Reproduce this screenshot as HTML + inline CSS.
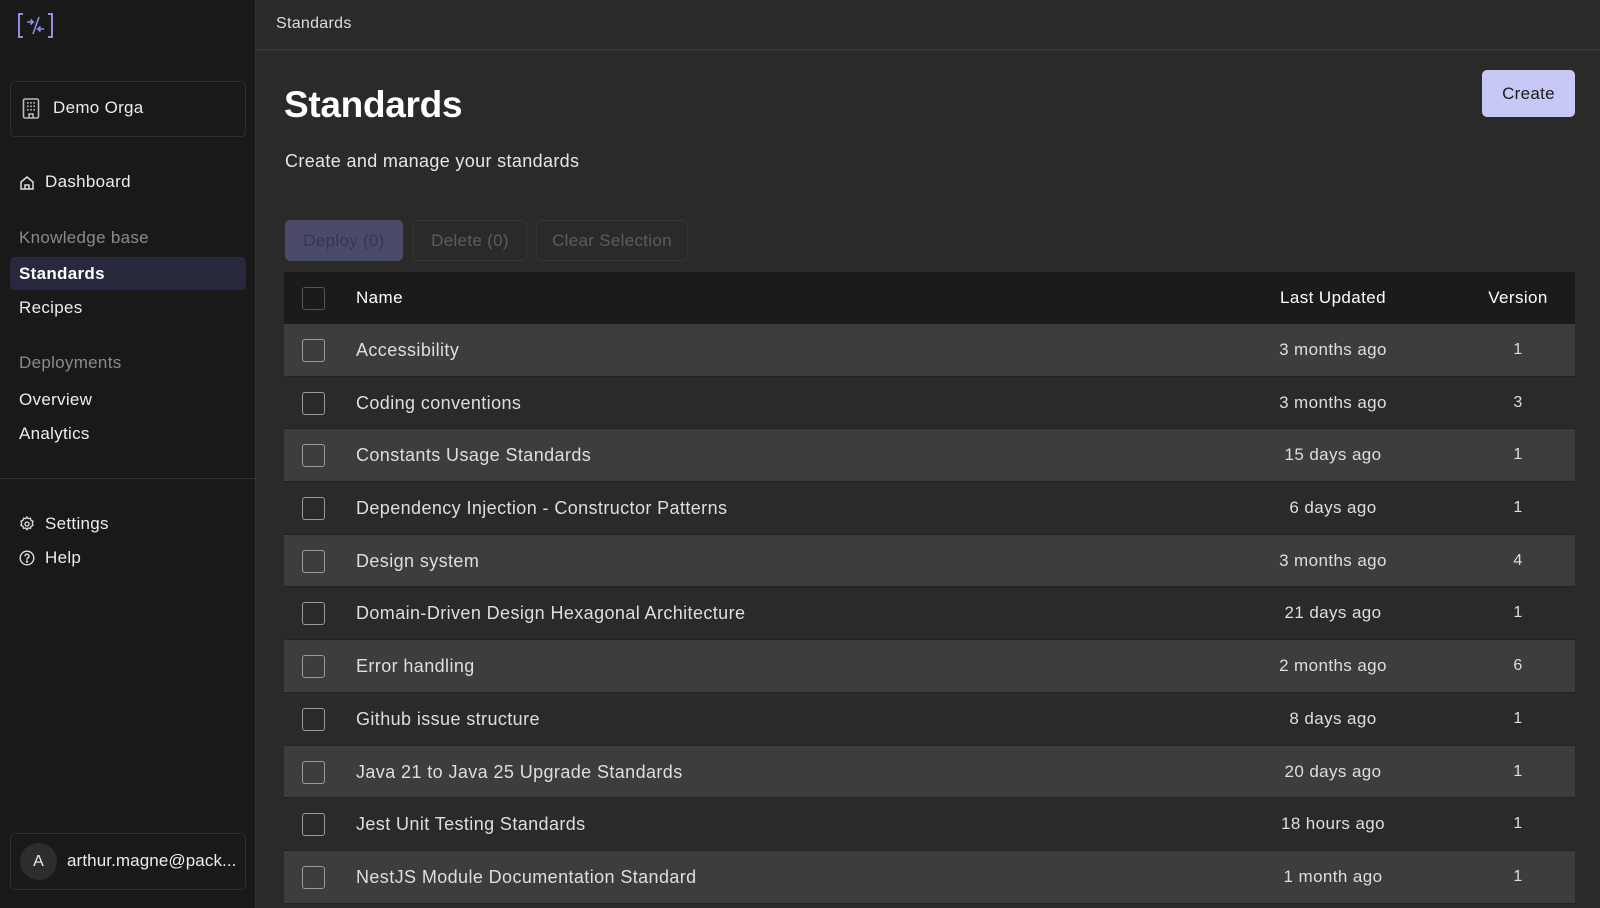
<!DOCTYPE html>
<html><head><meta charset="utf-8"><style>
*{box-sizing:border-box;margin:0;padding:0}
body{width:1600px;height:908px;overflow:hidden;background:#2a2a29;font-family:"Liberation Sans",sans-serif;color:#e8e8e8;position:relative}
.sb{position:absolute;left:0;top:0;width:256px;height:908px;background:#191919;border-right:1px solid #333}
.a{position:absolute;white-space:nowrap}
.nav{font-size:17px;color:#ececec;letter-spacing:0.3px}
.sec{font-size:17px;color:#8a8a8a;letter-spacing:0.3px}
.main{position:absolute;left:256px;top:0;right:0;height:908px}
.top{position:absolute;left:0;top:0;right:0;height:51px;border-bottom:2px solid #363636}
.btn{position:absolute;top:220px;height:41px;border-radius:5px;font-size:17px;line-height:39px;text-align:center;border:1px solid #363636;color:#5c5c5c;letter-spacing:0.3px}
.tbl{position:absolute;left:284px;top:272px;width:1291px}
.row{height:52.7px;position:relative;border-bottom:1px solid #222;font-size:18px;letter-spacing:0.4px}
.row .cb{position:absolute;left:18px;top:15px;width:23px;height:23px;border:1.5px solid #9a9a9a;border-radius:3px}
.row .n{position:absolute;left:72px;top:0;line-height:52px;color:#dedede}
.row .d{position:absolute;left:934px;width:230px;text-align:center;line-height:52px;font-size:17px;color:#dedede}
.row .v{position:absolute;left:1204px;width:60px;text-align:center;line-height:52px;font-size:16px;color:#dedede}
.o{background:#3d3d3c}.e{background:#2a2a29}
</style></head><body>
<div class="sb">
 <svg class="a" style="left:17px;top:13px" width="37" height="25" viewBox="0 0 37 25" fill="none" stroke="#8f8fe6" stroke-width="2"><path d="M6 1H2v23h4"/><path d="M31 1h4v23h-4"/><path d="M10 9h6l-2.5-2.5M16 9l-2.5 2.5" stroke-width="1.6"/><path d="M22 4l-6 17" stroke-width="1.6"/><path d="M27 16h-6l2.5-2.5M21 16l2.5 2.5" stroke-width="1.6"/></svg>
 <div class="a" style="left:10px;top:81px;width:236px;height:56px;border:1px solid #2e2e2e;border-radius:5px"></div>
 <svg class="a" style="left:22px;top:98px" width="18" height="21" viewBox="0 0 18 21" fill="none" stroke="#bbb" stroke-width="1.6"><rect x="1.5" y="1" width="15" height="19" rx="1.5"/><path d="M7 20v-4h4v4" /><g fill="#bbb" stroke="none"><rect x="5" y="4" width="1.6" height="1.6"/><rect x="8.2" y="4" width="1.6" height="1.6"/><rect x="11.4" y="4" width="1.6" height="1.6"/><rect x="5" y="7.5" width="1.6" height="1.6"/><rect x="8.2" y="7.5" width="1.6" height="1.6"/><rect x="11.4" y="7.5" width="1.6" height="1.6"/><rect x="5" y="11" width="1.6" height="1.6"/><rect x="8.2" y="11" width="1.6" height="1.6"/><rect x="11.4" y="11" width="1.6" height="1.6"/></g></svg>
 <div class="a nav" style="left:53px;top:98px">Demo Orga</div>
 <svg class="a" style="left:19px;top:175px" width="16" height="16" viewBox="0 0 16 16" fill="none" stroke="#ddd" stroke-width="1.5"><path d="M2 7L8 2l6 5v7H2z"/><path d="M6 14v-4h4v4"/></svg>
 <div class="a nav" style="left:45px;top:172px">Dashboard</div>
 <div class="a sec" style="left:19px;top:228px">Knowledge base</div>
 <div class="a" style="left:10px;top:257px;width:236px;height:33px;background:#28283d;border-radius:4px"></div>
 <div class="a nav" style="left:19px;top:264px;font-weight:bold;color:#fff">Standards</div>
 <div class="a nav" style="left:19px;top:298px">Recipes</div>
 <div class="a sec" style="left:19px;top:353px">Deployments</div>
 <div class="a nav" style="left:19px;top:390px">Overview</div>
 <div class="a nav" style="left:19px;top:424px">Analytics</div>
 <div class="a" style="left:0;top:478px;width:256px;height:1px;background:#333"></div>
 <svg class="a" style="left:19px;top:516px" width="16" height="16" viewBox="0 0 24 24" fill="none" stroke="#ddd" stroke-width="2"><circle cx="12" cy="12" r="3"/><path d="M12 1.5l2 2.5 3.2-.6.8 3.1 3 1.4-1 3.1 1 3.1-3 1.4-.8 3.1-3.2-.6-2 2.5-2-2.5-3.2.6-.8-3.1-3-1.4 1-3.1-1-3.1 3-1.4.8-3.1 3.2.6z"/></svg>
 <div class="a nav" style="left:45px;top:514px">Settings</div>
 <svg class="a" style="left:19px;top:550px" width="16" height="16" viewBox="0 0 16 16" fill="none" stroke="#ddd" stroke-width="1.4"><circle cx="8" cy="8" r="6.8"/><path d="M6 6.2a2 2 0 1 1 2.6 1.9c-.4.2-.6.6-.6 1v.6"/><circle cx="8" cy="11.6" r=".5" fill="#ddd"/></svg>
 <div class="a nav" style="left:45px;top:548px">Help</div>
 <div class="a" style="left:10px;top:833px;width:236px;height:57px;border:1px solid #2e2e2e;border-radius:5px"></div>
 <div class="a" style="left:20px;top:843px;width:37px;height:37px;border-radius:50%;background:#2d2d2d;color:#eee;font-size:16px;text-align:center;line-height:37px">A</div>
 <div class="a nav" style="left:67px;top:851px;letter-spacing:0.1px">arthur.magne@pack...</div>
</div>
<div class="main">
 <div class="top"><div class="a" style="left:20px;top:15px;font-size:16px;color:#ddd;letter-spacing:0.3px">Standards</div></div>
 <div class="a" style="left:1226px;top:70px;width:93px;height:47px;background:#c8c8f7;border-radius:5px;color:#1a1a1a;font-size:17px;text-align:center;line-height:47px;letter-spacing:0.3px">Create</div>
</div>
<div class="a" style="left:284px;top:84px;font-size:37px;font-weight:bold;color:#fff;letter-spacing:-0.3px">Standards</div>
<div class="a" style="left:285px;top:151px;font-size:18px;color:#e6e6e6;letter-spacing:0.35px">Create and manage your standards</div>
<div class="btn" style="left:285px;width:118px;background:#4a4b6a;border-color:#4a4b6a;color:#333850">Deploy (0)</div>
<div class="btn" style="left:413px;width:114px">Delete (0)</div>
<div class="btn" style="left:536px;width:152px">Clear Selection</div>
<div class="tbl">
 <div class="row" style="background:#1b1b1b;height:52px;border:none;font-size:17px">
  <div class="cb" style="border-color:#555;border-width:1px"></div>
  <div class="n" style="color:#fff">Name</div>
  <div class="d" style="color:#fff">Last Updated</div>
  <div class="v" style="color:#fff;font-size:17px;width:80px;left:1194px">Version</div>
 </div>
 <div class="row o"><div class="cb"></div><div class="n">Accessibility</div><div class="d">3 months ago</div><div class="v">1</div></div>
 <div class="row e"><div class="cb"></div><div class="n">Coding conventions</div><div class="d">3 months ago</div><div class="v">3</div></div>
 <div class="row o"><div class="cb"></div><div class="n">Constants Usage Standards</div><div class="d">15 days ago</div><div class="v">1</div></div>
 <div class="row e"><div class="cb"></div><div class="n">Dependency Injection - Constructor Patterns</div><div class="d">6 days ago</div><div class="v">1</div></div>
 <div class="row o"><div class="cb"></div><div class="n">Design system</div><div class="d">3 months ago</div><div class="v">4</div></div>
 <div class="row e"><div class="cb"></div><div class="n">Domain-Driven Design Hexagonal Architecture</div><div class="d">21 days ago</div><div class="v">1</div></div>
 <div class="row o"><div class="cb"></div><div class="n">Error handling</div><div class="d">2 months ago</div><div class="v">6</div></div>
 <div class="row e"><div class="cb"></div><div class="n">Github issue structure</div><div class="d">8 days ago</div><div class="v">1</div></div>
 <div class="row o"><div class="cb"></div><div class="n">Java 21 to Java 25 Upgrade Standards</div><div class="d">20 days ago</div><div class="v">1</div></div>
 <div class="row e"><div class="cb"></div><div class="n">Jest Unit Testing Standards</div><div class="d">18 hours ago</div><div class="v">1</div></div>
 <div class="row o"><div class="cb"></div><div class="n">NestJS Module Documentation Standard</div><div class="d">1 month ago</div><div class="v">1</div></div>
</div>
</body></html>
